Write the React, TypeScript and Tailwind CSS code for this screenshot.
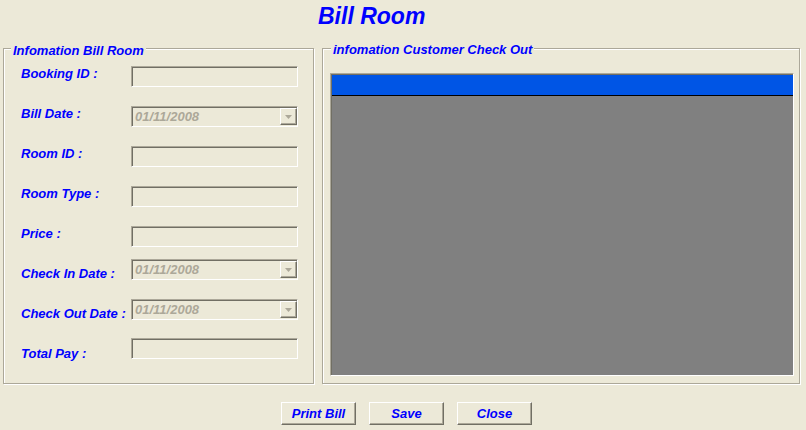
const labels = [
  "Booking ID :",
  "Bill Date :",
  "Room ID :",
  "Room Type :",
  "Price :",
  "Check In Date :",
  "Check Out Date :",
  "Total Pay :",
];

const fields = [
  { kind: "text", gap: "mt-0" },
  { kind: "date", gap: "mt-[19px]" },
  { kind: "text", gap: "mt-[19px]" },
  { kind: "text", gap: "mt-[19px]" },
  { kind: "text", gap: "mt-[19px]" },
  { kind: "date", gap: "mt-[12px]" },
  { kind: "date", gap: "mt-[19px]" },
  { kind: "text", gap: "mt-[18px]" },
];

const sunken =
  "h-[21px] w-[167px] border border-t-[#ACA899] border-l-[#ACA899] border-r-white border-b-white shadow-[inset_1px_1px_0_#716F64]";

function TextBox({ className }: { className: string }) {
  return <div className={`${sunken} ${className}`} />;
}

function DateBox({ className }: { className: string }) {
  return (
    <div className={`${sunken} flex items-start justify-between ${className}`}>
      <span className="pl-[3px] pt-[1px] text-[13px] leading-[18px] font-bold italic text-[#ACA899]">
        01/11/2008
      </span>
      <span className="mt-[1px] flex h-[17px] w-[17px] items-center justify-center border border-t-white border-l-white border-r-[#716F64] border-b-[#716F64] shadow-[inset_-1px_-1px_0_#ACA899]">
        <svg width="7" height="4" viewBox="0 0 7 4">
          <path d="M0 0h7L3.5 4z" fill="#ACA899" />
        </svg>
      </span>
    </div>
  );
}

function Button({ label }: { label: string }) {
  return (
    <button className="flex h-[23px] w-[75px] items-center justify-center border border-t-white border-l-white border-r-[#716F64] border-b-[#716F64] shadow-[inset_-1px_-1px_0_#ACA899] bg-[#ECE9D8] text-[13px] font-bold italic text-[#0000ff]">
      {label}
    </button>
  );
}

export default function App() {
  return (
    <div className="flex h-[430px] w-[806px] flex-col bg-[#ECE9D8] font-['Liberation_Sans',Arial,sans-serif] text-[#0000ff]">
      <div className="h-[48px] pl-[318px] pt-[3px]">
        <span className="text-[23px] leading-[27px] font-bold italic">Bill Room</span>
      </div>

      <div className="flex">
        {/* left group */}
        <div className="relative ml-[3px] h-[336px] w-[311px] border border-[#ACA899] shadow-[inset_1px_1px_0_#fff,1px_1px_0_#fff]">
          <span className="absolute -top-[6px] left-[7px] bg-[#ECE9D8] px-[2px] text-[13px] leading-[15px] font-bold italic">
            Infomation Bill Room
          </span>
          <div className="flex pl-[17px] pt-[17px]">
            <div className="flex w-[110px] flex-col gap-[25px]">
              {labels.map((l) => (
                <span key={l} className="text-[13px] leading-[15px] font-bold italic whitespace-nowrap">
                  {l}
                </span>
              ))}
            </div>
            <div className="flex flex-col">
              {fields.map((f, i) =>
                f.kind === "date" ? (
                  <DateBox key={i} className={f.gap} />
                ) : (
                  <TextBox key={i} className={f.gap} />
                )
              )}
            </div>
          </div>
        </div>

        {/* right group */}
        <div className="relative ml-[8px] h-[336px] w-[478px] border border-[#ACA899] shadow-[inset_1px_1px_0_#fff,1px_1px_0_#fff]">
          <span className="absolute -top-[7px] left-[8px] bg-[#ECE9D8] px-[2px] text-[13px] leading-[15px] font-bold italic">
            infomation Customer Check Out
          </span>
          <div className="pl-[7px] pt-[24px]">
            <div className="flex h-[303px] w-[464px] flex-col border border-t-[#ACA899] border-l-[#ACA899] border-r-white border-b-white shadow-[inset_1px_1px_0_#716F64] bg-[#808080] pl-[1px] pt-[1px]">
              <div className="h-[21px] border-b border-black bg-[#0055E5]" />
            </div>
          </div>
        </div>
      </div>

      <div className="mt-[18px] flex gap-[13px] pl-[281px]">
        <Button label="Print Bill" />
        <Button label="Save" />
        <Button label="Close" />
      </div>
    </div>
  );
}
